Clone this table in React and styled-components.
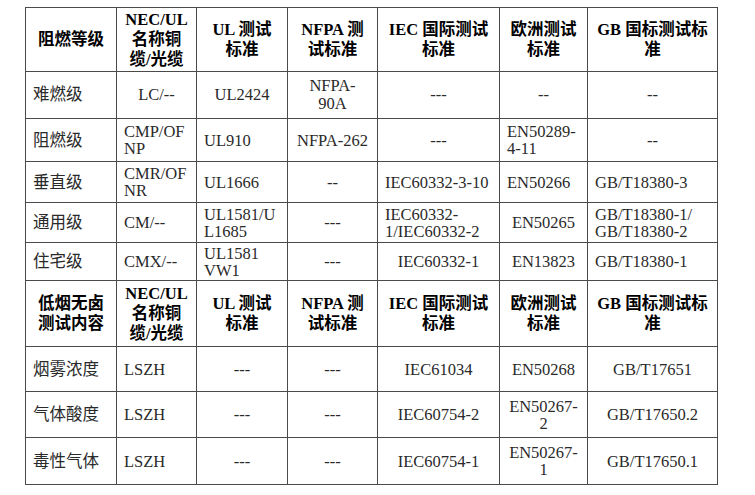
import React from 'react';
import styled, { createGlobalStyle } from 'styled-components';

const GlobalStyle = createGlobalStyle`
  html, body {
    margin: 0;
    padding: 0;
    background: #ffffff;
  }
  body {
    font-family: "Liberation Serif", "Noto Sans CJK SC", serif;
  }
`;

const COLS = [91, 80, 91, 90, 122, 88, 130];

// строки: высота, межстрочный интервал, ячейки [текст, выравнивание]
const header1 = {
  h: 64,
  cells: [
    ['阻燃等级'],
    ['NEC/UL|名称铜|缆/光缆'],
    ['UL 测试|标准'],
    ['NFPA 测|试标准'],
    ['IEC 国际测试|标准'],
    ['欧洲测试|标准'],
    ['GB 国标测试标|准'],
  ],
};

const header2 = {
  h: 66,
  cells: [
    ['低烟无卤|测试内容'],
    ['NEC/UL|名称铜|缆/光缆'],
    ['UL 测试|标准'],
    ['NFPA 测|试标准'],
    ['IEC 国际测试|标准'],
    ['欧洲测试|标准'],
    ['GB 国标测试标|准'],
  ],
};

const fireRows = [
  {
    h: 47, lh: 18,
    cells: [['难燃级', 'left'], ['LC/--', 'center'], ['UL2424', 'center'], ['NFPA-|90A', 'center'], ['---', 'center'], ['--', 'center'], ['--', 'center']],
  },
  {
    h: 43, lh: 17,
    cells: [['阻燃级', 'left'], ['CMP/OF|NP', 'left'], ['UL910', 'left'], ['NFPA-262', 'center'], ['---', 'center'], ['EN50289-|4-11', 'left'], ['--', 'center']],
  },
  {
    h: 41, lh: 17,
    cells: [['垂直级', 'left'], ['CMR/OF|NR', 'left'], ['UL1666', 'left'], ['--', 'center'], ['IEC60332-3-10', 'left'], ['EN50266', 'left'], ['GB/T18380-3', 'left']],
  },
  {
    h: 40, lh: 17,
    cells: [['通用级', 'left'], ['CM/--', 'left'], ['UL1581/U|L1685', 'left'], ['---', 'center'], ['IEC60332-|1/IEC60332-2', 'left'], ['EN50265', 'center'], ['GB/T18380-1/|GB/T18380-2', 'left']],
  },
  {
    h: 38, lh: 17,
    cells: [['住宅级', 'left'], ['CMX/--', 'left'], ['UL1581|VW1', 'left'], ['---', 'center'], ['IEC60332-1', 'center'], ['EN13823', 'center'], ['GB/T18380-1', 'left']],
  },
];

const smokeRows = [
  {
    h: 45, lh: 17,
    cells: [['烟雾浓度', 'left'], ['LSZH', 'left'], ['---', 'center'], ['---', 'center'], ['IEC61034', 'center'], ['EN50268', 'center'], ['GB/T17651', 'center']],
  },
  {
    h: 46, lh: 17,
    cells: [['气体酸度', 'left'], ['LSZH', 'left'], ['---', 'center'], ['---', 'center'], ['IEC60754-2', 'center'], ['EN50267-|2', 'center'], ['GB/T17650.2', 'center']],
  },
  {
    h: 47, lh: 17,
    cells: [['毒性气体', 'left'], ['LSZH', 'left'], ['---', 'center'], ['---', 'center'], ['IEC60754-1', 'center'], ['EN50267-|1', 'center'], ['GB/T17650.1', 'center']],
  },
];

const Lines = ({ text }) =>
  text.split('|').map((line, i) => (
    <React.Fragment key={i}>
      {i > 0 && <br />}
      {line}
    </React.Fragment>
  ));

const HeaderRow = ({ row }) => (
  <tr>
    {row.cells.map(([text], i) => (
      <Th key={i} $h={row.h}>
        <Lines text={text} />
      </Th>
    ))}
  </tr>
);

const BodyRow = ({ row }) => (
  <tr>
    {row.cells.map(([text, align], i) => (
      <Td key={i} $h={row.h} $lh={row.lh} $align={align}>
        <Lines text={text} />
      </Td>
    ))}
  </tr>
);

const App = () => (
  <>
    <GlobalStyle />
    <Page>
      <Table>
        <colgroup>
          {COLS.map((w, i) => (
            <col key={i} style={{ width: w }} />
          ))}
        </colgroup>
        <tbody>
          <HeaderRow row={header1} />
          {fireRows.map((r, i) => (
            <BodyRow key={i} row={r} />
          ))}
          <HeaderRow row={header2} />
          {smokeRows.map((r, i) => (
            <BodyRow key={i} row={r} />
          ))}
        </tbody>
      </Table>
    </Page>
  </>
);

const Page = styled.div`
  padding: 7px 0 0 25px;
`;

const Table = styled.table`
  border-collapse: collapse;
  table-layout: fixed;
  width: 692px;
  font-size: 16.5px;
`;

const Th = styled.td`
  height: ${p => p.$h}px;
  border: 1px solid #4a4a4a;
  padding: 0 6px;
  box-sizing: border-box;
  text-align: center;
  vertical-align: middle;
  font-weight: bold;
  color: #000;
  line-height: 20px;
  white-space: nowrap;
`;

const Td = styled.td`
  height: ${p => p.$h}px;
  border: 1px solid #4a4a4a;
  padding: 0 7px;
  box-sizing: border-box;
  text-align: ${p => p.$align};
  vertical-align: middle;
  color: #2a2a2a;
  line-height: ${p => p.$lh}px;
  white-space: nowrap;
`;

export default App;
